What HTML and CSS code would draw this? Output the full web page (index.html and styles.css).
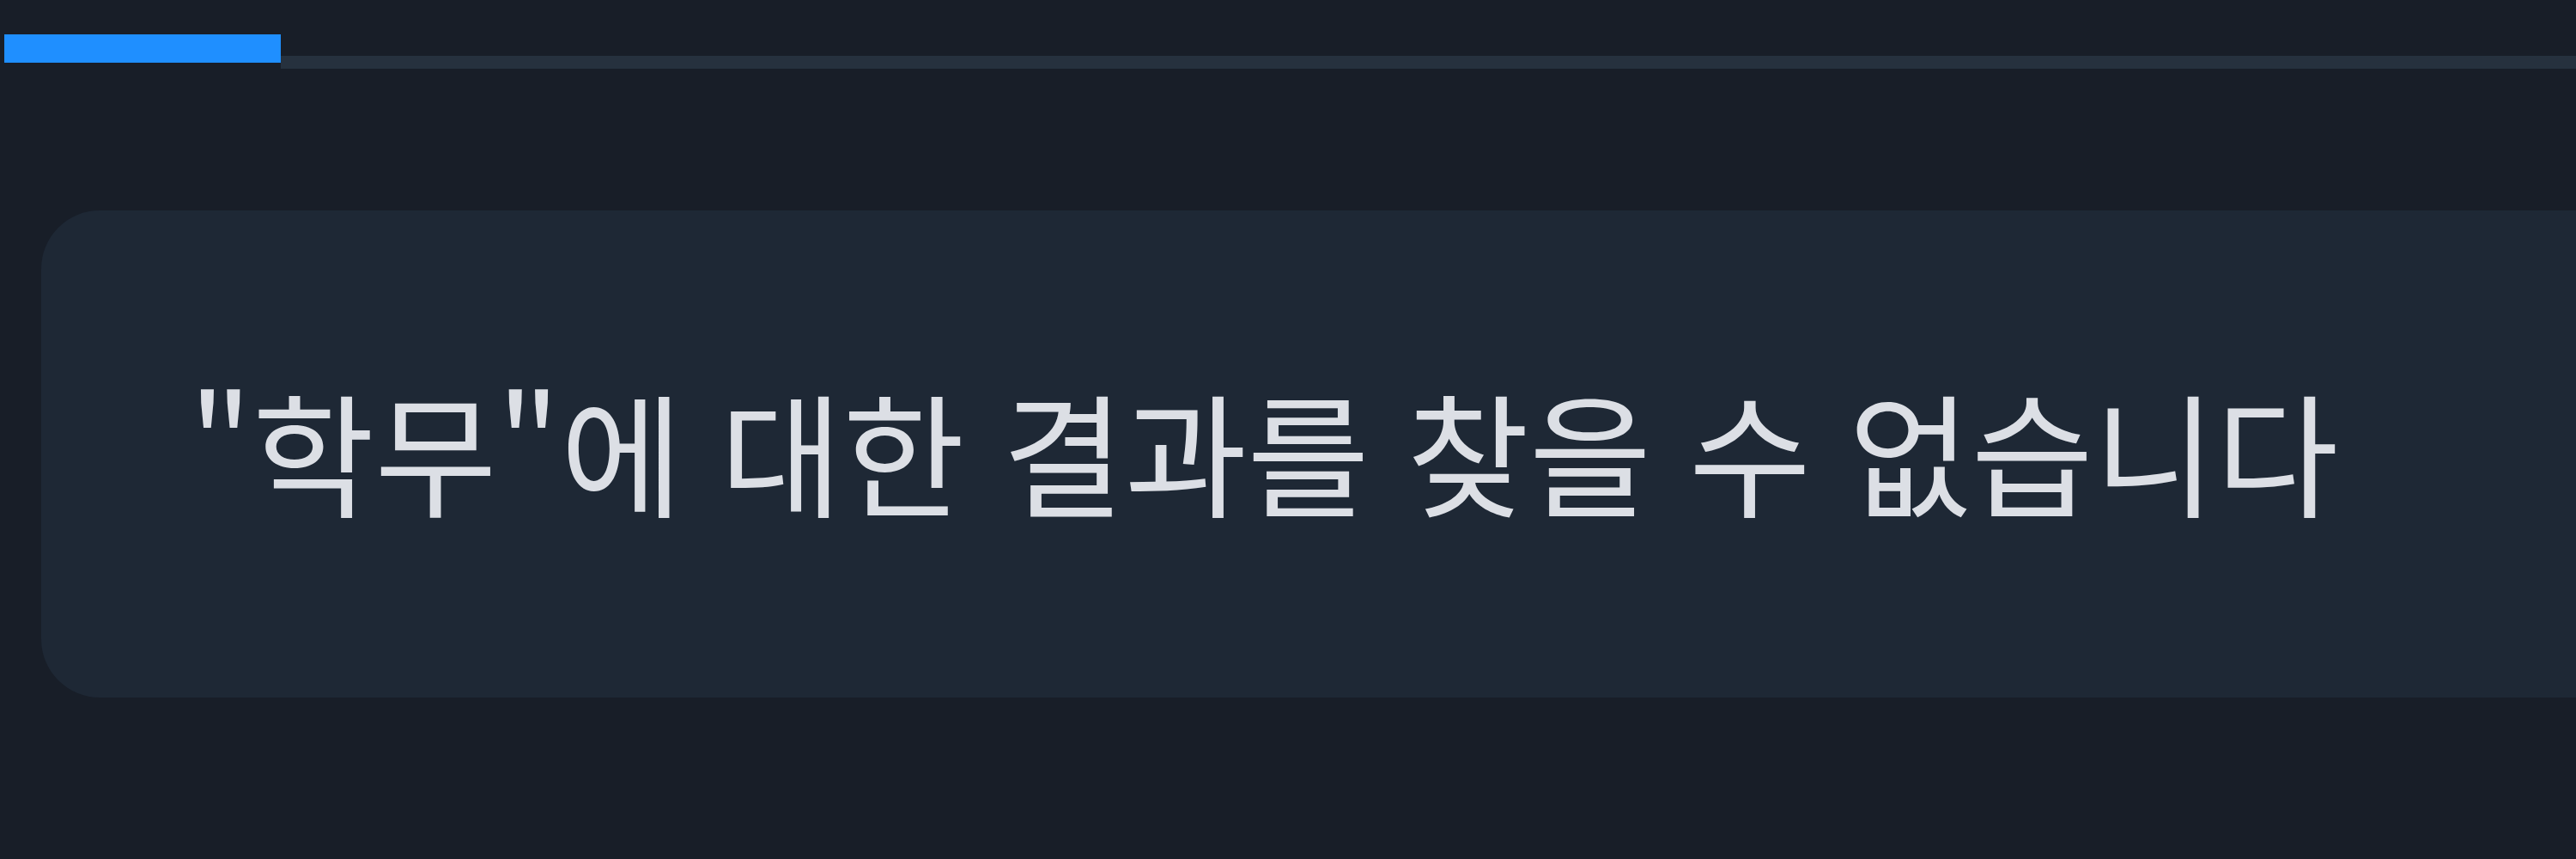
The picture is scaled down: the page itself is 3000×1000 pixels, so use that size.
FILE: index.html
```html
<!DOCTYPE html>
<html lang="ko">
<head>
<meta charset="utf-8">
<title>검색 결과 없음</title>
<link rel="stylesheet" href="styles.css">
</head>
<body>
  <div class="page">
    <div class="tabs">
      <div class="tab-indicator"></div>
      <div class="tab-rule"></div>
    </div>
    <div class="empty-card">
      <p class="empty-text">"학무"에 대한 결과를 찾을 수 없습니다</p>
    </div>
  </div>
</body>
</html>
```

FILE: styles.css
```css
html, body {
  margin: 0;
  padding: 0;
  background: #181e28;
  overflow: hidden;
}

.page {
  width: 3000px;
  height: 1000px;
  background: #181e28;
  font-family: "Noto Sans CJK KR", "Noto Sans", sans-serif;
}

.tabs {
  display: flex;
  align-items: flex-start;
  padding-top: 40px;
  padding-left: 5px;
  height: 40px;
}

.tab-indicator {
  width: 322px;
  height: 33px;
  background: #1f8fff;
  flex: none;
}

.tab-rule {
  flex: 1;
  height: 15px;
  margin-top: 25px;
  background: #26313e;
}

.empty-card {
  box-sizing: border-box;
  margin-top: 165px;
  margin-left: 48px;
  margin-right: -120px;
  height: 567px;
  padding: 0 0 12px 172px;
  background: #1e2835;
  border-radius: 68px;
  display: flex;
  align-items: center;
}

.empty-text {
  margin: 0;
  color: #dcdfe5;
  font-size: 155px;
  line-height: 1;
  white-space: nowrap;
}
```
